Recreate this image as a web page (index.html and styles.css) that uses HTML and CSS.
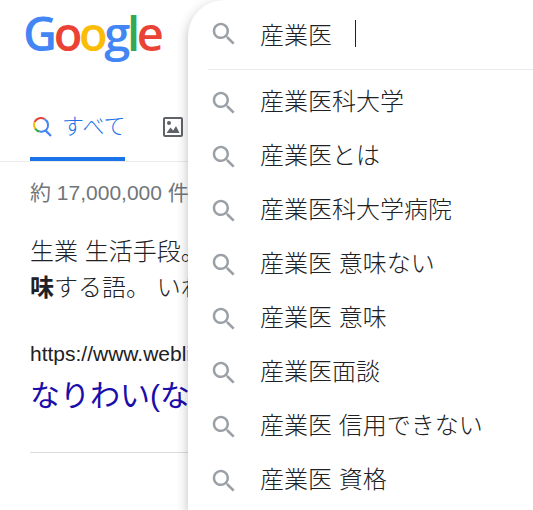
FILE: index.html
```html
<!DOCTYPE html>
<html lang="ja">
<head>
  <meta charset="UTF-8" />
  <title>産業医 - Google 検索</title>
  <link rel="stylesheet" href="styles.css">
</head>
<body>
  <svg class="defs" width="0" height="0">
    <symbol id="search" viewBox="0 0 24 24">
      <path d="M15.500 14h-.79l-.28-.27C15.410 12.590 16 11.110 16 9.500 16 5.910 13.090 3 9.500 3S3 5.910 3 9.500 5.910 16 9.500 16c1.610 0 3.090-.59 4.230-1.570l.27.28v.79l5 4.990L20.490 19l-4.990-5zm-6 0C7.010 14 5 11.990 5 9.500S7.010 5 9.500 5 14 7.010 14 9.500 11.990 14 9.500 14z"/>
    </symbol>
  </svg>

  <div class="logo"><span class="blue">G</span><span class="red">o</span><span class="yellow">o</span><span class="blue">g</span><span class="green">l</span><span class="red">e</span></div>

  <div class="tabs">
    <div class="tab active">
      <svg class="tab-icon" viewBox="0 0 20 20" fill="none" stroke-width="2">
        <path d="M12.600 2.100A7 7 0 0 0 2.600 5" stroke="#ea4335"/>
        <path d="M2.600 5a7 7 0 0 0 .6 6.600" stroke="#fbbc05"/>
        <path d="M3.200 11.600a7 7 0 0 0 4.600 3" stroke="#34a853"/>
        <path d="M7.800 14.600a7 7 0 0 0 6.800-2.200 7 7 0 0 0-2-10.300" stroke="#4285f4"/>
        <path d="M13.400 13.400 19 19" stroke="#4285f4" stroke-width="2.200"/>
      </svg>
      <span>すべて</span>
    </div>
    <div class="tab">
      <svg class="tab-icon" viewBox="0 0 20 20">
        <path fill="#5f6368" d="M18 2v16H2V2h16m0-2H2C.9 0 0 .9 0 2v16c0 1.100.9 2 2 2h16c1.100 0 2-.9 2-2V2c0-1.100-.9-2-2-2z"/>
        <circle fill="#5f6368" cx="6" cy="6" r="2"/>
        <path fill="#5f6368" d="M3.500 16l4-5.500 2.700 3 2.800-4.500 3.500 7z"/>
      </svg>
    </div>
  </div>

  <div class="results">
    <div class="count">約 17,000,000 件 (0.45 秒)</div>
    <div class="snippet">
      生業 生活手段。<br>
      <b>味</b>する語。 いわゆる
    </div>
    <div class="result-url">https://www.weblio.jp</div>
    <a class="result-title">なりわい(なりわい)</a>
    <div class="result-end"></div>
  </div>

  <div class="suggest">
    <div class="suggest-input">
      <svg class="search-icon"><use href="#search"/></svg>
      <span>産業医</span>
      <i class="caret"></i>
    </div>
    <div class="suggest-list">
      <div class="suggest-row"><svg class="search-icon"><use href="#search"/></svg><span>産業医科大学</span></div>
      <div class="suggest-row"><svg class="search-icon"><use href="#search"/></svg><span>産業医とは</span></div>
      <div class="suggest-row"><svg class="search-icon"><use href="#search"/></svg><span>産業医科大学病院</span></div>
      <div class="suggest-row"><svg class="search-icon"><use href="#search"/></svg><span>産業医 意味ない</span></div>
      <div class="suggest-row"><svg class="search-icon"><use href="#search"/></svg><span>産業医 意味</span></div>
      <div class="suggest-row"><svg class="search-icon"><use href="#search"/></svg><span>産業医面談</span></div>
      <div class="suggest-row"><svg class="search-icon"><use href="#search"/></svg><span>産業医 信用できない</span></div>
      <div class="suggest-row"><svg class="search-icon"><use href="#search"/></svg><span>産業医 資格</span></div>
    </div>
  </div>
</body>
</html>
```

FILE: styles.css
```css
html, body {
  height: 100%;
}

body {
  margin: 0;
  background: #fff;
  color: #202124;
  font-family: "Liberation Sans", "Noto Sans CJK JP", sans-serif;
  overflow: hidden;
  white-space: nowrap;
}

b {
  font-weight: 700;
}

.defs {
  display: block;
  height: 0;
}

.logo {
  height: 70px;
  padding-left: 23px;
  font-family: "Open Sans", sans-serif;
  font-size: 47px;
  font-weight: 600;
  line-height: 66px;
  letter-spacing: -3.400px;
  box-sizing: border-box;
}

.blue { color: #4285f4; }
.red { color: #ea4335; }
.yellow { color: #fbbc05; }
.green { color: #34a853; }

.tabs {
  display: flex;
  gap: 38px;
  height: 92px;
  padding-left: 30px;
  border-bottom: 1px solid #ebebeb;
  box-sizing: border-box;
}

.tab {
  display: flex;
  align-items: flex-start;
  gap: 10px;
  padding-top: 47px;
  color: #1a73e8;
  font-size: 22px;
  font-weight: 300;
  line-height: 20px;
  box-sizing: border-box;
}

.tab.active {
  width: 95px;
  height: 91px;
  padding-left: 2px;
  border-bottom: 4px solid #1a73e8;
}

.tab-icon {
  width: 20px;
  height: 20px;
  flex: none;
}

.results {
  padding-left: 30px;
}

.count {
  margin-top: 17px;
  color: #70757a;
  font-size: 21px;
  line-height: 28px;
}

.snippet {
  margin-top: 27px;
  font-size: 24px;
  font-weight: 300;
  line-height: 36px;
}

.result-url {
  margin-top: 34px;
  font-size: 21px;
  line-height: 28px;
}

.result-title {
  display: block;
  margin-top: 8px;
  color: #1a0dab;
  font-size: 30px;
  line-height: 40px;
}

.result-end {
  width: 158px;
  margin-top: 36px;
  border-top: 1px solid #dadce0;
}

.suggest {
  position: absolute;
  top: 0;
  left: 188px;
  right: 0;
  bottom: 0;
  background: #fff;
  border-radius: 36px 0 0 0;
  box-shadow: 0 4px 12px rgba(32, 33, 36, 0.3);
  font-size: 24px;
  font-weight: 300;
}

.suggest-input {
  display: flex;
  align-items: center;
  height: 66px;
  padding-bottom: 3px;
  margin-left: 20px;
  border-bottom: 1px solid #e8eaed;
}

.search-icon {
  width: 30px;
  height: 30px;
  margin-left: 1px;
  margin-right: 21px;
  flex: none;
  fill: #9aa0a6;
}

.suggest-input .search-icon {
  margin-top: 1px;
}

.caret {
  width: 1px;
  height: 27px;
  margin-left: 23px;
  background: #202124;
}

.suggest-list {
  padding-top: 2px;
  margin-left: 20px;
}

.suggest-row {
  display: flex;
  align-items: center;
  height: 54px;
}

.suggest-row .search-icon {
  margin-top: 8px;
}
```
